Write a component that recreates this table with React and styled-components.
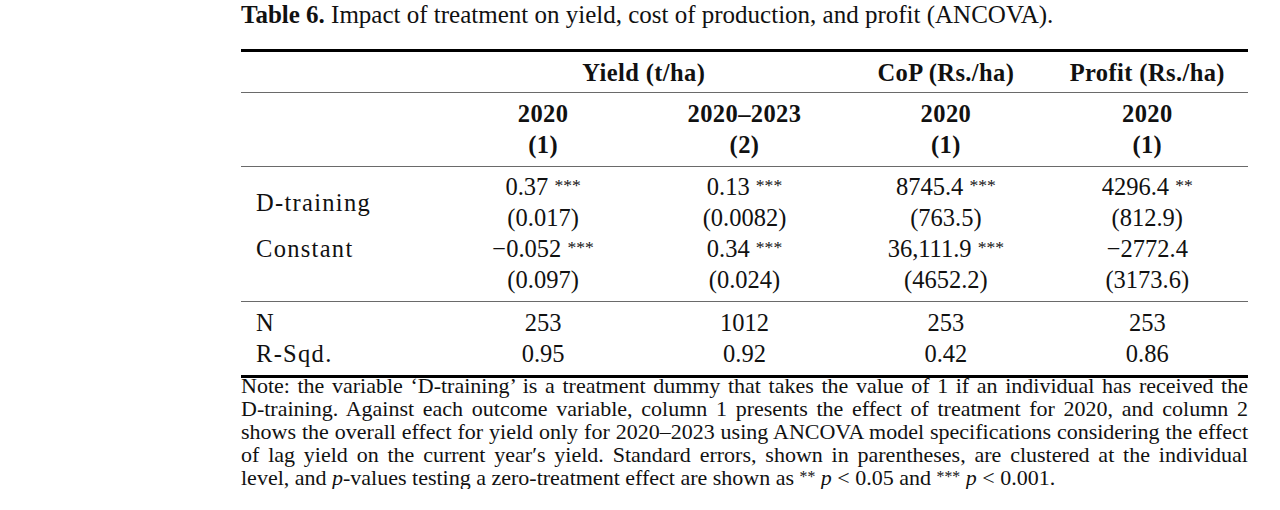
import React from 'react'
import styled, { createGlobalStyle } from 'styled-components'

const GlobalStyle = createGlobalStyle`
    html, body {
        margin: 0;
        padding: 0;
        background: #fff;
    }
    body {
        font-family: "Liberation Serif", "Times New Roman", serif;
        color: #111;
    }
`;

const rows = [
    { label: 'D-training', span: true, values: ['0.37', '0.13', '8745.4', '4296.4'], stars: [3, 3, 3, 2], errors: ['(0.017)', '(0.0082)', '(763.5)', '(812.9)'] },
    { label: 'Constant', values: ['\u22120.052', '0.34', '36,111.9', '\u22122772.4'], stars: [3, 3, 3, 0], errors: ['(0.097)', '(0.024)', '(4652.2)', '(3173.6)'] },
];

const stats = [
    { label: 'N', values: ['253', '1012', '253', '253'] },
    { label: 'R-Sqd.', values: ['0.95', '0.92', '0.42', '0.86'] },
];

const years = [['2020', '(1)'], ['2020\u20132023', '(2)'], ['2020', '(1)'], ['2020', '(1)']];

const Stars = ({ n }) => (n > 0 ? <Star>{'*'.repeat(n)}</Star> : null);

const App = () => {
    return (
        <>
            <GlobalStyle />
            <Page>
                <Caption><b>Table 6.</b> Impact of treatment on yield, cost of production, and profit (ANCOVA).</Caption>
                <Table>
                    <Band $pad="4.5px 0 4.5px">
                        <Cell />
                        <HeadCell $span={2}>Yield (t/ha)</HeadCell>
                        <HeadCell>CoP (Rs./ha)</HeadCell>
                        <HeadCell>Profit (Rs./ha)</HeadCell>
                    </Band>
                    <Band $pad="4.5px 0 6.5px">
                        <Cell />
                        {years.map(([y, c], i) => (
                            <HeadCell key={i}>{y}<br />{c}</HeadCell>
                        ))}
                    </Band>
                    <Band $pad="4px 0 6px">
                        {rows.map((r) => (
                            <React.Fragment key={r.label}>
                                <Label $rows={r.span ? 2 : 1}>{r.label}</Label>
                                {r.values.map((v, i) => (
                                    <Cell key={'v' + i}>{v}{r.stars[i] > 0 && ' '}<Stars n={r.stars[i]} /></Cell>
                                ))}
                                {!r.span && <Label />}
                                {r.errors.map((e, i) => (
                                    <Cell key={'e' + i}>{e}</Cell>
                                ))}
                            </React.Fragment>
                        ))}
                    </Band>
                    <Band $pad="4.5px 0 6.5px" $last>
                        {stats.map((s) => (
                            <React.Fragment key={s.label}>
                                <Label>{s.label}</Label>
                                {s.values.map((v, i) => <Cell key={i}>{v}</Cell>)}
                            </React.Fragment>
                        ))}
                    </Band>
                </Table>
                <Note>
                    <NoteLine>Note: the variable ‘D-training’ is a treatment dummy that takes the value of 1 if an individual has received the</NoteLine>
                    <NoteLine>D-training. Against each outcome variable, column 1 presents the effect of treatment for 2020, and column 2</NoteLine>
                    <NoteLine>shows the overall effect for yield only for 2020–2023 using ANCOVA model specifications considering the effect</NoteLine>
                    <NoteLine>of lag yield on the current year′s yield. Standard errors, shown in parentheses, are clustered at the individual</NoteLine>
                    <NoteLine $last>level, and <i>p</i>-values testing a zero-treatment effect are shown as <Star>**</Star> <i>p</i> &lt; 0.05 and <Star>***</Star> <i>p</i> &lt; 0.001.</NoteLine>
                </Note>
            </Page>
        </>
    )
}

const Page = styled.div`
    width: 1007px;
    margin-left: 241px;
`;

const Caption = styled.div`
    font-size: 25px;
    line-height: 30px;
    margin-bottom: 19px;
    white-space: nowrap;
    b{
        font-weight: 700;
    }
`;

const Table = styled.div`
    border-top: 3px solid #000;
    font-size: 24.5px;
    line-height: 31px;
`;

const Band = styled.div`
    display: grid;
    grid-template-columns: repeat(5, 1fr);
    grid-auto-rows: auto;
    padding: ${(p) => p.$pad};
    border-bottom: ${(p) => (p.$last ? '3px solid #000' : '1px solid #6a6a6a')};
`;

const Cell = styled.div`
    text-align: center;
    white-space: nowrap;
`;

const HeadCell = styled(Cell)`
    font-weight: 700;
    letter-spacing: 0.4px;
    grid-column: span ${(p) => p.$span || 1};
`;

const Label = styled.div`
    padding-left: 15px;
    letter-spacing: 1.3px;
    white-space: nowrap;
    grid-row: span ${(p) => p.$rows || 1};
    align-self: center;
`;

const Star = styled.span`
    font-size: 0.72em;
    vertical-align: 0.2em;
    line-height: 0;
`;

const Note = styled.div`
    margin-top: -4px;
    font-size: 22px;
    line-height: 23px;
`;

const NoteLine = styled.div`
    white-space: nowrap;
    text-align: ${(p) => (p.$last ? 'left' : 'justify')};
    text-align-last: ${(p) => (p.$last ? 'left' : 'justify')};
`;

export default App
